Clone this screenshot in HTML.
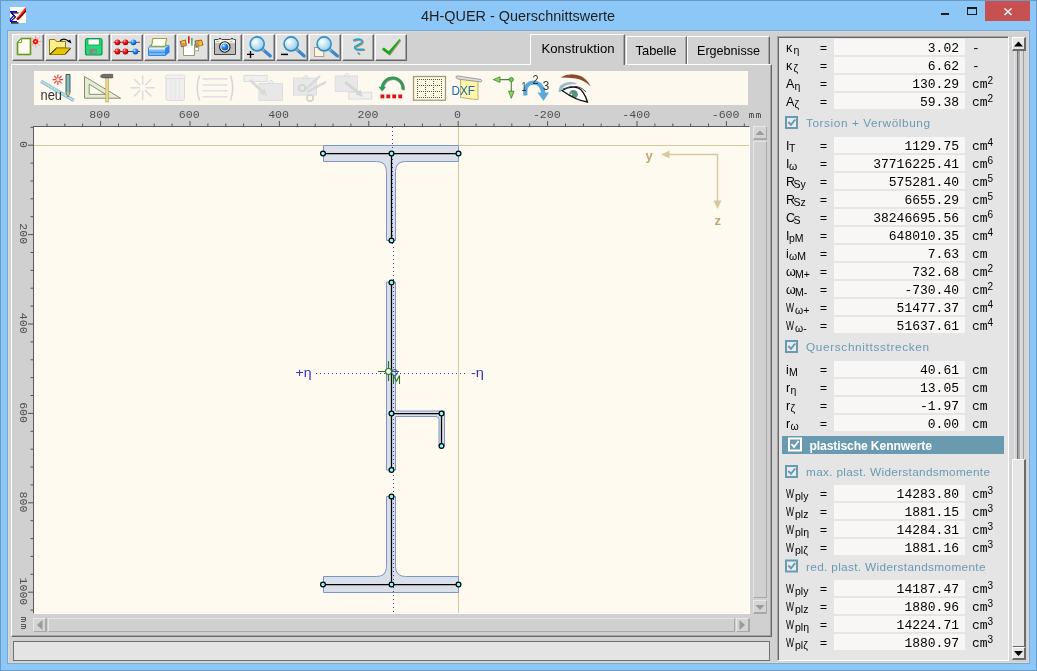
<!DOCTYPE html><html><head><meta charset="utf-8"><title>4H-QUER</title><style>
*{margin:0;padding:0;box-sizing:border-box}
html,body{width:1037px;height:671px;overflow:hidden}
body{position:relative;background:#8DC7F8;font-family:"Liberation Sans",sans-serif}
.a{position:absolute}
.tb{width:32px;height:27px;background:#e1e1e1;border-top:1px solid #fff;border-left:1px solid #fff;border-right:1px solid #666;border-bottom:1px solid #666;box-shadow:inset -1px -1px #a4a4a4}
.tab{background:#d3d3d3;border-top:1px solid #fff;border-left:1px solid #fff;border-right:1px solid #666;box-shadow:inset -1px 0 #a4a4a4}
svg{position:absolute;left:0;top:0;will-change:transform}
</style></head><body>
<div class="a" style="left:0;top:0;width:1037px;height:671px;border:1px solid #6a9ac6"></div>
<div class="a" style="left:7px;top:30px;width:1023px;height:634px;background:#d1d1d1;border:1px solid #78a8d4;box-shadow:inset 1px 1px #dcd9d5,inset -1px -1px #dcd9d5"></div>
<div class="a" style="left:985px;top:1px;width:45px;height:20px;background:#c75050"></div>
<div class="a tb" style="left:12px;top:34px"></div>
<div class="a tb" style="left:45px;top:34px"></div>
<div class="a tb" style="left:78px;top:34px"></div>
<div class="a tb" style="left:111px;top:34px"></div>
<div class="a tb" style="left:144px;top:34px"></div>
<div class="a tb" style="left:177px;top:34px"></div>
<div class="a tb" style="left:210px;top:34px"></div>
<div class="a tb" style="left:243px;top:34px"></div>
<div class="a tb" style="left:276px;top:34px"></div>
<div class="a tb" style="left:309px;top:34px"></div>
<div class="a tb" style="left:342px;top:34px"></div>
<div class="a tb" style="left:375px;top:34px"></div>
<div class="a" style="left:11px;top:64px;width:761px;height:573px;background:#d0d0d0;border-top:1px solid #fff;border-left:1px solid #fff;border-right:1px solid #666;border-bottom:1px solid #666;box-shadow:inset -1px -1px #a4a4a4"></div>
<div class="a tab" style="left:530px;top:34px;width:95px;height:31px;background:#d0d0d0"></div>
<div class="a tab" style="left:626px;top:36px;width:61px;height:28px"></div>
<div class="a tab" style="left:687px;top:36px;width:83px;height:28px"></div>
<div class="a" style="left:34px;top:71px;width:714px;height:34px;background:#fdf9ef"></div>
<div class="a" style="left:33px;top:126px;width:717px;height:488px;background:#fffaef;border-left:1px solid #5a5a5a;border-top:1px solid #5a5a5a;border-right:1px solid #fff;border-bottom:1px solid #fff"></div>
<div class="a" style="left:753px;top:126px;width:14px;height:488px;background:#d0d0d0"></div>
<div class="a" style="left:753px;top:126px;width:14px;height:14px;background:#d4d4d4;border-top:1px solid #e8e8e8;border-left:1px solid #e8e8e8;border-right:1px solid #a8a8a8;border-bottom:2px solid #a8a8a8"></div>
<div class="a" style="left:753px;top:141px;width:14px;height:457px;background:#d0d0d0;border-top:1px solid #e4e4e4;border-left:1px solid #e4e4e4;border-right:1px solid #a8a8a8;border-bottom:1px solid #a8a8a8"></div>
<div class="a" style="left:753px;top:600px;width:14px;height:14px;background:#d4d4d4;border-top:1px solid #e8e8e8;border-left:1px solid #e8e8e8;border-right:1px solid #a8a8a8;border-bottom:2px solid #a8a8a8"></div>
<div class="a" style="left:33px;top:618px;width:14px;height:14px;background:#d4d4d4;border-top:1px solid #e8e8e8;border-left:1px solid #e8e8e8;border-right:2px solid #a8a8a8;border-bottom:1px solid #a8a8a8"></div>
<div class="a" style="left:48px;top:618px;width:687px;height:14px;background:#d0d0d0;border-top:1px solid #e4e4e4;border-left:1px solid #e4e4e4;border-right:1px solid #a8a8a8;border-bottom:1px solid #a8a8a8"></div>
<div class="a" style="left:736px;top:618px;width:14px;height:14px;background:#d4d4d4;border-top:1px solid #e8e8e8;border-left:1px solid #e8e8e8;border-right:2px solid #a8a8a8;border-bottom:1px solid #a8a8a8"></div>
<div class="a" style="left:13px;top:641px;width:757px;height:20px;background:#e4e4e4;border:1px solid #707070"></div>
<div class="a" style="left:777px;top:36px;width:232px;height:625px;background:#e5e5e5;border-top:1px solid #a4a4a4;border-left:1px solid #a4a4a4;border-right:1px solid #fff;border-bottom:1px solid #fff;box-shadow:inset 1px 1px #666"></div>
<div class="a" style="left:1009px;top:37px;width:19px;height:623px;background:#d4d4d4"></div>
<div class="a" style="left:1014px;top:51px;width:1px;height:408px;background:#e2e2e2"></div>
<div class="a" style="left:1017px;top:51px;width:1px;height:408px;background:#727272"></div>
<div class="a" style="left:1018px;top:51px;width:2px;height:408px;background:#a4a4ac"></div>
<div class="a" style="left:1020px;top:51px;width:1px;height:408px;background:#e4e4e4"></div>
<div class="a" style="left:1023px;top:51px;width:1px;height:408px;background:#a0a0a0"></div>
<div class="a" style="left:1012px;top:37px;width:14px;height:14px;background:#e6e6e6;border-top:1px solid #fff;border-left:1px solid #fff;border-right:2px solid #6a6a6a;border-bottom:2px solid #6a6a6a"></div>
<div class="a" style="left:1012px;top:459px;width:14px;height:189px;background:#e6e6e6;border-top:1px solid #fff;border-left:1px solid #fff;border-right:2px solid #6a6a6a;border-bottom:2px solid #6a6a6a"></div>
<div class="a" style="left:1012px;top:647px;width:14px;height:13px;background:#e6e6e6;border-top:1px solid #fff;border-left:1px solid #fff;border-right:2px solid #6a6a6a;border-bottom:2px solid #6a6a6a"></div>
<svg width="1037" height="671"><text x="518" y="20.5" font-family="Liberation Sans" font-size="14.5" fill="#1f1f1f" text-anchor="middle" font-weight="normal" textLength="194" lengthAdjust="spacingAndGlyphs" >4H-QUER - Querschnittswerte</text><rect x="10" y="7" width="16" height="16" fill="#fffaea"/><path d="M10 12H17.5M10.8 12.5L14.5 16L10.8 19.5V21.5M10 22H17.5" fill="none" stroke="#000" stroke-width="1.1" transform="translate(1 0.9)"/><path d="M10 11.5H17M10.5 12L14 15.5L10.5 19V21.5M10 21.5H17" fill="none" stroke="#0000ff" stroke-width="1.2"/><path d="M16 19L25.8 7L26 12L18.5 20Z" fill="#ff0000"/><path d="M17.5 19.8L26 11" stroke="#000" stroke-width="1"/><path d="M18.5 16.5L25 9" stroke="#ffb0b0" stroke-width="0.7" stroke-dasharray="1 1"/><rect x="941" y="13" width="8" height="2" fill="#1a1a1a"/><rect x="967.5" y="7.5" width="9" height="7" fill="none" stroke="#1a1a1a" stroke-width="1"/><rect x="967" y="7" width="10" height="2" fill="#1a1a1a"/><path d="M1004.5 8.5L1011.5 15M1011.5 8.5L1004.5 15" stroke="#fff" stroke-width="1.5"/><text x="578" y="53" font-family="Liberation Sans" font-size="13" fill="#000" text-anchor="middle" font-weight="normal" textLength="73" lengthAdjust="spacingAndGlyphs" >Konstruktion</text><text x="656" y="55" font-family="Liberation Sans" font-size="13" fill="#000" text-anchor="middle" font-weight="normal" textLength="41" lengthAdjust="spacingAndGlyphs" >Tabelle</text><text x="728.5" y="55" font-family="Liberation Sans" font-size="13" fill="#000" text-anchor="middle" font-weight="normal" textLength="63" lengthAdjust="spacingAndGlyphs" >Ergebnisse</text><path d="M47.0 123.5V126" stroke="#555" stroke-width="1"/><path d="M64.8 123.5V126" stroke="#555" stroke-width="1"/><path d="M82.7 123.5V126" stroke="#555" stroke-width="1"/><path d="M100.6 121V126" stroke="#555" stroke-width="1"/><text x="99.8" y="118" font-family="Liberation Mono" font-size="11.6" fill="#505050" text-anchor="middle" font-weight="normal" >800</text><rect x="99.3" y="113.7" width="1" height="1" fill="#505050"/><rect x="106.3" y="113.7" width="1" height="1" fill="#505050"/><path d="M118.5 123.5V126" stroke="#555" stroke-width="1"/><path d="M136.4 123.5V126" stroke="#555" stroke-width="1"/><path d="M154.2 123.5V126" stroke="#555" stroke-width="1"/><path d="M172.1 123.5V126" stroke="#555" stroke-width="1"/><path d="M190.0 121V126" stroke="#555" stroke-width="1"/><text x="189.2" y="118" font-family="Liberation Mono" font-size="11.6" fill="#505050" text-anchor="middle" font-weight="normal" >600</text><rect x="188.7" y="113.7" width="1" height="1" fill="#505050"/><rect x="195.7" y="113.7" width="1" height="1" fill="#505050"/><path d="M207.9 123.5V126" stroke="#555" stroke-width="1"/><path d="M225.8 123.5V126" stroke="#555" stroke-width="1"/><path d="M243.6 123.5V126" stroke="#555" stroke-width="1"/><path d="M261.5 123.5V126" stroke="#555" stroke-width="1"/><path d="M279.4 121V126" stroke="#555" stroke-width="1"/><text x="278.6" y="118" font-family="Liberation Mono" font-size="11.6" fill="#505050" text-anchor="middle" font-weight="normal" >400</text><rect x="278.1" y="113.7" width="1" height="1" fill="#505050"/><rect x="285.1" y="113.7" width="1" height="1" fill="#505050"/><path d="M297.3 123.5V126" stroke="#555" stroke-width="1"/><path d="M315.2 123.5V126" stroke="#555" stroke-width="1"/><path d="M333.0 123.5V126" stroke="#555" stroke-width="1"/><path d="M350.9 123.5V126" stroke="#555" stroke-width="1"/><path d="M368.8 121V126" stroke="#555" stroke-width="1"/><text x="368.0" y="118" font-family="Liberation Mono" font-size="11.6" fill="#505050" text-anchor="middle" font-weight="normal" >200</text><rect x="367.5" y="113.7" width="1" height="1" fill="#505050"/><rect x="374.5" y="113.7" width="1" height="1" fill="#505050"/><path d="M386.7 123.5V126" stroke="#555" stroke-width="1"/><path d="M404.6 123.5V126" stroke="#555" stroke-width="1"/><path d="M422.4 123.5V126" stroke="#555" stroke-width="1"/><path d="M440.3 123.5V126" stroke="#555" stroke-width="1"/><path d="M458.2 121V126" stroke="#555" stroke-width="1"/><text x="457.4" y="118" font-family="Liberation Mono" font-size="11.6" fill="#505050" text-anchor="middle" font-weight="normal" >0</text><rect x="456.9" y="113.7" width="1" height="1" fill="#505050"/><path d="M476.1 123.5V126" stroke="#555" stroke-width="1"/><path d="M494.0 123.5V126" stroke="#555" stroke-width="1"/><path d="M511.8 123.5V126" stroke="#555" stroke-width="1"/><path d="M529.7 123.5V126" stroke="#555" stroke-width="1"/><path d="M547.6 121V126" stroke="#555" stroke-width="1"/><text x="546.8" y="118" font-family="Liberation Mono" font-size="11.6" fill="#505050" text-anchor="middle" font-weight="normal" >-200</text><rect x="549.8" y="113.7" width="1" height="1" fill="#505050"/><rect x="556.7" y="113.7" width="1" height="1" fill="#505050"/><path d="M565.5 123.5V126" stroke="#555" stroke-width="1"/><path d="M583.4 123.5V126" stroke="#555" stroke-width="1"/><path d="M601.2 123.5V126" stroke="#555" stroke-width="1"/><path d="M619.1 123.5V126" stroke="#555" stroke-width="1"/><path d="M637.0 121V126" stroke="#555" stroke-width="1"/><text x="636.2" y="118" font-family="Liberation Mono" font-size="11.6" fill="#505050" text-anchor="middle" font-weight="normal" >-400</text><rect x="639.2" y="113.7" width="1" height="1" fill="#505050"/><rect x="646.1" y="113.7" width="1" height="1" fill="#505050"/><path d="M654.9 123.5V126" stroke="#555" stroke-width="1"/><path d="M672.8 123.5V126" stroke="#555" stroke-width="1"/><path d="M690.6 123.5V126" stroke="#555" stroke-width="1"/><path d="M708.5 123.5V126" stroke="#555" stroke-width="1"/><path d="M726.4 121V126" stroke="#555" stroke-width="1"/><text x="725.6" y="118" font-family="Liberation Mono" font-size="11.6" fill="#505050" text-anchor="middle" font-weight="normal" >-600</text><rect x="728.6" y="113.7" width="1" height="1" fill="#505050"/><rect x="735.5" y="113.7" width="1" height="1" fill="#505050"/><path d="M744.3 123.5V126" stroke="#555" stroke-width="1"/><path d="M749.5 118V113.5H753L753.5 114V118M751.5 113.5V118M756.5 118V113.5H760L760.5 114V118M758.5 113.5V118" fill="none" stroke="#5a5a5a" stroke-width="1"/><path d="M30.5 127.3H33" stroke="#555" stroke-width="1"/><path d="M28 145.2H33" stroke="#555" stroke-width="1"/><text x="0" y="0" transform="translate(19.5 144.4) rotate(90)" font-family="Liberation Mono" font-size="11.6" fill="#505050" text-anchor="middle">0</text><rect x="22.8" y="143.9" width="1" height="1" fill="#505050"/><path d="M30.5 163.1H33" stroke="#555" stroke-width="1"/><path d="M30.5 181.0H33" stroke="#555" stroke-width="1"/><path d="M30.5 198.8H33" stroke="#555" stroke-width="1"/><path d="M30.5 216.7H33" stroke="#555" stroke-width="1"/><path d="M28 234.6H33" stroke="#555" stroke-width="1"/><text x="0" y="0" transform="translate(19.5 233.8) rotate(90)" font-family="Liberation Mono" font-size="11.6" fill="#505050" text-anchor="middle">200</text><rect x="22.8" y="233.3" width="1" height="1" fill="#505050"/><rect x="22.8" y="240.3" width="1" height="1" fill="#505050"/><path d="M30.5 252.5H33" stroke="#555" stroke-width="1"/><path d="M30.5 270.4H33" stroke="#555" stroke-width="1"/><path d="M30.5 288.2H33" stroke="#555" stroke-width="1"/><path d="M30.5 306.1H33" stroke="#555" stroke-width="1"/><path d="M28 324.0H33" stroke="#555" stroke-width="1"/><text x="0" y="0" transform="translate(19.5 323.2) rotate(90)" font-family="Liberation Mono" font-size="11.6" fill="#505050" text-anchor="middle">400</text><rect x="22.8" y="322.7" width="1" height="1" fill="#505050"/><rect x="22.8" y="329.7" width="1" height="1" fill="#505050"/><path d="M30.5 341.9H33" stroke="#555" stroke-width="1"/><path d="M30.5 359.8H33" stroke="#555" stroke-width="1"/><path d="M30.5 377.6H33" stroke="#555" stroke-width="1"/><path d="M30.5 395.5H33" stroke="#555" stroke-width="1"/><path d="M28 413.4H33" stroke="#555" stroke-width="1"/><text x="0" y="0" transform="translate(19.5 412.6) rotate(90)" font-family="Liberation Mono" font-size="11.6" fill="#505050" text-anchor="middle">600</text><rect x="22.8" y="412.1" width="1" height="1" fill="#505050"/><rect x="22.8" y="419.1" width="1" height="1" fill="#505050"/><path d="M30.5 431.3H33" stroke="#555" stroke-width="1"/><path d="M30.5 449.2H33" stroke="#555" stroke-width="1"/><path d="M30.5 467.0H33" stroke="#555" stroke-width="1"/><path d="M30.5 484.9H33" stroke="#555" stroke-width="1"/><path d="M28 502.8H33" stroke="#555" stroke-width="1"/><text x="0" y="0" transform="translate(19.5 502.0) rotate(90)" font-family="Liberation Mono" font-size="11.6" fill="#505050" text-anchor="middle">800</text><rect x="22.8" y="501.5" width="1" height="1" fill="#505050"/><rect x="22.8" y="508.5" width="1" height="1" fill="#505050"/><path d="M30.5 520.7H33" stroke="#555" stroke-width="1"/><path d="M30.5 538.6H33" stroke="#555" stroke-width="1"/><path d="M30.5 556.4H33" stroke="#555" stroke-width="1"/><path d="M30.5 574.3H33" stroke="#555" stroke-width="1"/><path d="M28 592.2H33" stroke="#555" stroke-width="1"/><text x="0" y="0" transform="translate(19.5 591.4) rotate(90)" font-family="Liberation Mono" font-size="11.6" fill="#505050" text-anchor="middle">1000</text><rect x="22.8" y="587.4" width="1" height="1" fill="#505050"/><rect x="22.8" y="594.4" width="1" height="1" fill="#505050"/><rect x="22.8" y="601.3" width="1" height="1" fill="#505050"/><path d="M30.5 610.1H33" stroke="#555" stroke-width="1"/><g transform="translate(26 617) rotate(90)"><path d="M0.5 5V0.5H4L4.5 1V5M2.5 0.5V5M7.5 5V0.5H11L11.5 1V5M9.5 0.5V5" fill="none" stroke="#5a5a5a" stroke-width="1"/></g><path d="M34 145.5H749M458.5 127V613" stroke="#d8c99c" stroke-width="1"/><path d="M316 373h1v1h-1zM320 373h1v1h-1zM324 373h1v1h-1zM328 373h1v1h-1zM332 373h1v1h-1zM336 373h1v1h-1zM340 373h1v1h-1zM344 373h1v1h-1zM348 373h1v1h-1zM352 373h1v1h-1zM356 373h1v1h-1zM360 373h1v1h-1zM364 373h1v1h-1zM368 373h1v1h-1zM372 373h1v1h-1zM376 373h1v1h-1zM380 373h1v1h-1zM384 373h1v1h-1zM388 373h1v1h-1zM392 373h1v1h-1zM396 373h1v1h-1zM400 373h1v1h-1zM404 373h1v1h-1zM408 373h1v1h-1zM412 373h1v1h-1zM416 373h1v1h-1zM420 373h1v1h-1zM424 373h1v1h-1zM428 373h1v1h-1zM432 373h1v1h-1zM436 373h1v1h-1zM440 373h1v1h-1zM444 373h1v1h-1zM448 373h1v1h-1zM452 373h1v1h-1zM456 373h1v1h-1zM460 373h1v1h-1zM464 373h1v1h-1z" fill="#3232c8"/><text x="295.5" y="377" font-family="Liberation Sans" font-size="12.5" fill="#3232c8" text-anchor="start" font-weight="normal" textLength="16" lengthAdjust="spacingAndGlyphs" >+η</text><text x="471" y="377" font-family="Liberation Sans" font-size="12.5" fill="#3232c8" text-anchor="start" font-weight="normal" textLength="13" lengthAdjust="spacingAndGlyphs" >-η</text><path d="M323.5 145.5H458.5V161.5H405.5Q395.5 161.5 395.5 171.5V240.5H386.5V171.5Q386.5 161.5 376.5 161.5H323.5Z" fill="#d9e0ea" stroke="#7b97c0" stroke-width="1"/><path d="M323.5 592.5H458.5V576.5H405.5Q395.5 576.5 395.5 566.5V496.5H386.5V566.5Q386.5 576.5 376.5 576.5H323.5Z" fill="#d9e0ea" stroke="#7b97c0" stroke-width="1"/><path d="M386.5 282V470H395.5V416.5H436Q439 416.5 439 419.5V446H444.5V411H395.5V282Z" fill="#d9e0ea" stroke="#7b97c0" stroke-width="1"/><path d="M392 127h1v1h-1zM392 131h1v1h-1zM392 135h1v1h-1zM392 139h1v1h-1zM392 143h1v1h-1zM392 147h1v1h-1zM392 151h1v1h-1zM392 155h1v1h-1zM392 159h1v1h-1zM392 163h1v1h-1zM392 167h1v1h-1zM392 171h1v1h-1zM392 175h1v1h-1zM392 179h1v1h-1zM392 183h1v1h-1zM392 187h1v1h-1zM392 191h1v1h-1zM392 195h1v1h-1zM392 199h1v1h-1zM392 203h1v1h-1zM392 207h1v1h-1zM392 211h1v1h-1zM392 215h1v1h-1zM392 219h1v1h-1zM392 223h1v1h-1zM392 227h1v1h-1zM392 231h1v1h-1zM392 235h1v1h-1zM392 239h1v1h-1zM392 243h1v1h-1zM393 247h1v1h-1zM393 251h1v1h-1zM393 255h1v1h-1zM393 259h1v1h-1zM393 263h1v1h-1zM393 267h1v1h-1zM393 271h1v1h-1zM393 275h1v1h-1zM393 279h1v1h-1zM393 283h1v1h-1zM393 287h1v1h-1zM393 291h1v1h-1zM393 295h1v1h-1zM393 299h1v1h-1zM393 303h1v1h-1zM393 307h1v1h-1zM393 311h1v1h-1zM393 315h1v1h-1zM393 319h1v1h-1zM393 323h1v1h-1zM393 327h1v1h-1zM393 331h1v1h-1zM393 335h1v1h-1zM393 339h1v1h-1zM393 343h1v1h-1zM393 347h1v1h-1zM393 351h1v1h-1zM393 355h1v1h-1zM393 359h1v1h-1zM393 363h1v1h-1zM393 367h1v1h-1zM393 371h1v1h-1zM393 375h1v1h-1zM393 379h1v1h-1zM393 383h1v1h-1zM393 387h1v1h-1zM393 391h1v1h-1zM393 395h1v1h-1zM393 399h1v1h-1zM393 403h1v1h-1zM393 407h1v1h-1zM393 411h1v1h-1zM393 415h1v1h-1zM393 419h1v1h-1zM393 423h1v1h-1zM393 427h1v1h-1zM393 431h1v1h-1zM393 435h1v1h-1zM393 439h1v1h-1zM393 443h1v1h-1zM393 447h1v1h-1zM393 451h1v1h-1zM393 455h1v1h-1zM393 459h1v1h-1zM393 463h1v1h-1zM393 467h1v1h-1zM393 471h1v1h-1zM393 475h1v1h-1zM393 479h1v1h-1zM393 483h1v1h-1zM393 487h1v1h-1zM393 491h1v1h-1zM393 495h1v1h-1zM393 499h1v1h-1zM393 503h1v1h-1zM393 507h1v1h-1zM393 511h1v1h-1zM393 515h1v1h-1zM393 519h1v1h-1zM393 523h1v1h-1zM393 527h1v1h-1zM393 531h1v1h-1zM393 535h1v1h-1zM393 539h1v1h-1zM393 543h1v1h-1zM393 547h1v1h-1zM393 551h1v1h-1zM393 555h1v1h-1zM393 559h1v1h-1zM393 563h1v1h-1zM393 567h1v1h-1zM393 571h1v1h-1zM393 575h1v1h-1zM393 579h1v1h-1zM393 583h1v1h-1zM393 587h1v1h-1zM393 591h1v1h-1zM393 595h1v1h-1zM393 599h1v1h-1zM393 603h1v1h-1zM393 607h1v1h-1zM393 611h1v1h-1z" fill="#3232c8"/><path d="M323 153.5H458.5M391.5 153.5V240.5M391.5 282.5V470M391.5 413.5H441.5V446M323 584.5H458.5M391.5 584.5V496.5" fill="none" stroke="#000" stroke-width="1.25"/><circle cx="323" cy="153.5" r="2.4" fill="#80ffff" stroke="#000" stroke-width="1.25"/><circle cx="391.5" cy="153.5" r="2.4" fill="#80ffff" stroke="#000" stroke-width="1.25"/><circle cx="458.5" cy="153.5" r="2.4" fill="#80ffff" stroke="#000" stroke-width="1.25"/><circle cx="391.5" cy="240.5" r="2.4" fill="#80ffff" stroke="#000" stroke-width="1.25"/><circle cx="391.5" cy="282.5" r="2.4" fill="#80ffff" stroke="#000" stroke-width="1.25"/><circle cx="391.5" cy="470" r="2.4" fill="#80ffff" stroke="#000" stroke-width="1.25"/><circle cx="391.5" cy="413.5" r="2.4" fill="#80ffff" stroke="#000" stroke-width="1.25"/><circle cx="441.5" cy="413.5" r="2.4" fill="#80ffff" stroke="#000" stroke-width="1.25"/><circle cx="441.5" cy="446" r="2.4" fill="#80ffff" stroke="#000" stroke-width="1.25"/><circle cx="323" cy="584.5" r="2.4" fill="#80ffff" stroke="#000" stroke-width="1.25"/><circle cx="391.5" cy="584.5" r="2.4" fill="#80ffff" stroke="#000" stroke-width="1.25"/><circle cx="458.5" cy="584.5" r="2.4" fill="#80ffff" stroke="#000" stroke-width="1.25"/><circle cx="391.5" cy="496.5" r="2.4" fill="#80ffff" stroke="#000" stroke-width="1.25"/><circle cx="394.5" cy="372.5" r="3" fill="none" stroke="#3232c8" stroke-width="1"/><path d="M378 371.5H399M388.5 361V381" stroke="#1f7a1f" stroke-width="1.2"/><circle cx="388.5" cy="371.5" r="3" fill="#fff" stroke="#1f7a1f" stroke-width="1.2"/><path d="M393.5 384V375.5L396.5 381L399.5 375.5V384" fill="none" stroke="#1f7a1f" stroke-width="1.1"/><path d="M669 154.5H717.5V201" fill="none" stroke="#d8c99c" stroke-width="1.5"/><path d="M661 154.5L669.5 150.5V158.5Z" fill="#d8c99c"/><path d="M717.5 209L713.5 200.5H721.5Z" fill="#d8c99c"/><text x="645.5" y="160" font-family="Liberation Sans" font-size="13" fill="#bca874" text-anchor="start" font-weight="bold" >y</text><text x="714.5" y="225" font-family="Liberation Sans" font-size="13" fill="#bca874" text-anchor="start" font-weight="bold" >z</text><path d="M755.5 135H764.5L760 130.5Z" fill="#9a9a9a"/><path d="M755.5 605H764.5L760 610Z" fill="#9a9a9a"/><path d="M37 625L42.5 620V630Z" fill="#9a9a9a"/><path d="M745 625L739.5 620V630Z" fill="#9a9a9a"/><path d="M1014 46.5H1023L1018.5 41.5Z" fill="#000"/><path d="M1014 651H1023L1018.5 656Z" fill="#000"/><rect x="834" y="39" width="131" height="16" fill="#f8f7f5"/><text x="786" y="52" font-family="Liberation Sans" font-size="12.5" fill="#000" text-anchor="start" font-weight="normal" >κ</text><text x="793.5" y="54" font-family="Liberation Sans" font-size="10.5" fill="#000" text-anchor="start" font-weight="normal" >η</text><path d="M820.5 46.5H826.5M820.5 49.5H826.5" stroke="#000" stroke-width="1"/><text x="959" y="52" font-family="Liberation Mono" font-size="13" fill="#000" text-anchor="end" font-weight="normal" >3.02</text><rect x="946.7" y="47.2" width="1.2" height="1.2" fill="#000"/><text x="972" y="52" font-family="Liberation Mono" font-size="13" fill="#000" text-anchor="start" font-weight="normal" >-</text><rect x="834" y="57" width="131" height="16" fill="#f8f7f5"/><text x="786" y="70" font-family="Liberation Sans" font-size="12.5" fill="#000" text-anchor="start" font-weight="normal" >κ</text><text x="793.5" y="72" font-family="Liberation Sans" font-size="10.5" fill="#000" text-anchor="start" font-weight="normal" >ζ</text><path d="M820.5 64.5H826.5M820.5 67.5H826.5" stroke="#000" stroke-width="1"/><text x="959" y="70" font-family="Liberation Mono" font-size="13" fill="#000" text-anchor="end" font-weight="normal" >6.62</text><text x="972" y="70" font-family="Liberation Mono" font-size="13" fill="#000" text-anchor="start" font-weight="normal" >-</text><rect x="834" y="75" width="131" height="16" fill="#f8f7f5"/><text x="786" y="88" font-family="Liberation Sans" font-size="12.5" fill="#000" text-anchor="start" font-weight="normal" >A</text><text x="794.5" y="90" font-family="Liberation Sans" font-size="10.5" fill="#000" text-anchor="start" font-weight="normal" >η</text><path d="M820.5 82.5H826.5M820.5 85.5H826.5" stroke="#000" stroke-width="1"/><text x="959" y="88" font-family="Liberation Mono" font-size="13" fill="#000" text-anchor="end" font-weight="normal" >130.29</text><rect x="931.1" y="83.2" width="1.2" height="1.2" fill="#000"/><text x="972" y="88" font-family="Liberation Mono" font-size="13" fill="#000" text-anchor="start" font-weight="normal" >cm</text><text x="987.5" y="83.5" font-family="Liberation Sans" font-size="10" fill="#000" text-anchor="start" font-weight="normal" >2</text><rect x="834" y="93" width="131" height="16" fill="#f8f7f5"/><text x="786" y="106" font-family="Liberation Sans" font-size="12.5" fill="#000" text-anchor="start" font-weight="normal" >A</text><text x="794.5" y="108" font-family="Liberation Sans" font-size="10.5" fill="#000" text-anchor="start" font-weight="normal" >ζ</text><path d="M820.5 100.5H826.5M820.5 103.5H826.5" stroke="#000" stroke-width="1"/><text x="959" y="106" font-family="Liberation Mono" font-size="13" fill="#000" text-anchor="end" font-weight="normal" >59.38</text><text x="972" y="106" font-family="Liberation Mono" font-size="13" fill="#000" text-anchor="start" font-weight="normal" >cm</text><text x="987.5" y="101.5" font-family="Liberation Sans" font-size="10" fill="#000" text-anchor="start" font-weight="normal" >2</text><rect x="786" y="117" width="11" height="11" fill="#e8ecee" stroke="#6a9ab0" stroke-width="2"/><path d="M788.3 122L791 124.8L795.2 119.5" fill="none" stroke="#6a9ab0" stroke-width="2"/><text x="806" y="127" font-family="Liberation Sans" font-size="11.8" fill="#6a9ab0" text-anchor="start" font-weight="normal" textLength="124" lengthAdjust="spacing" >Torsion + Verwölbung</text><rect x="834" y="137" width="131" height="16" fill="#f8f7f5"/><text x="786" y="150" font-family="Liberation Sans" font-size="12.5" fill="#000" text-anchor="start" font-weight="normal" >I</text><text x="789.0" y="152" font-family="Liberation Sans" font-size="10.5" fill="#000" text-anchor="start" font-weight="normal" >T</text><path d="M820.5 144.5H826.5M820.5 147.5H826.5" stroke="#000" stroke-width="1"/><text x="959" y="150" font-family="Liberation Mono" font-size="13" fill="#000" text-anchor="end" font-weight="normal" >1129.75</text><text x="972" y="150" font-family="Liberation Mono" font-size="13" fill="#000" text-anchor="start" font-weight="normal" >cm</text><text x="987.5" y="145.5" font-family="Liberation Sans" font-size="10" fill="#000" text-anchor="start" font-weight="normal" >4</text><rect x="834" y="155" width="131" height="16" fill="#f8f7f5"/><text x="786" y="168" font-family="Liberation Sans" font-size="12.5" fill="#000" text-anchor="start" font-weight="normal" >I</text><text x="789.0" y="170" font-family="Liberation Sans" font-size="10.5" fill="#000" text-anchor="start" font-weight="normal" >ω</text><path d="M820.5 162.5H826.5M820.5 165.5H826.5" stroke="#000" stroke-width="1"/><text x="959" y="168" font-family="Liberation Mono" font-size="13" fill="#000" text-anchor="end" font-weight="normal" >37716225.41</text><text x="972" y="168" font-family="Liberation Mono" font-size="13" fill="#000" text-anchor="start" font-weight="normal" >cm</text><text x="987.5" y="163.5" font-family="Liberation Sans" font-size="10" fill="#000" text-anchor="start" font-weight="normal" >6</text><rect x="834" y="173" width="131" height="16" fill="#f8f7f5"/><text x="786" y="186" font-family="Liberation Sans" font-size="12.5" fill="#000" text-anchor="start" font-weight="normal" >R</text><text x="793.5" y="188" font-family="Liberation Sans" font-size="10.5" fill="#000" text-anchor="start" font-weight="normal" >Sy</text><path d="M820.5 180.5H826.5M820.5 183.5H826.5" stroke="#000" stroke-width="1"/><text x="959" y="186" font-family="Liberation Mono" font-size="13" fill="#000" text-anchor="end" font-weight="normal" >575281.40</text><rect x="954.5" y="181.2" width="1.2" height="1.2" fill="#000"/><text x="972" y="186" font-family="Liberation Mono" font-size="13" fill="#000" text-anchor="start" font-weight="normal" >cm</text><text x="987.5" y="181.5" font-family="Liberation Sans" font-size="10" fill="#000" text-anchor="start" font-weight="normal" >5</text><rect x="834" y="191" width="131" height="16" fill="#f8f7f5"/><text x="786" y="204" font-family="Liberation Sans" font-size="12.5" fill="#000" text-anchor="start" font-weight="normal" >R</text><text x="793.5" y="206" font-family="Liberation Sans" font-size="10.5" fill="#000" text-anchor="start" font-weight="normal" >Sz</text><path d="M820.5 198.5H826.5M820.5 201.5H826.5" stroke="#000" stroke-width="1"/><text x="959" y="204" font-family="Liberation Mono" font-size="13" fill="#000" text-anchor="end" font-weight="normal" >6655.29</text><text x="972" y="204" font-family="Liberation Mono" font-size="13" fill="#000" text-anchor="start" font-weight="normal" >cm</text><text x="987.5" y="199.5" font-family="Liberation Sans" font-size="10" fill="#000" text-anchor="start" font-weight="normal" >5</text><rect x="834" y="209" width="131" height="16" fill="#f8f7f5"/><text x="786" y="222" font-family="Liberation Sans" font-size="12.5" fill="#000" text-anchor="start" font-weight="normal" >C</text><text x="793.5" y="224" font-family="Liberation Sans" font-size="10.5" fill="#000" text-anchor="start" font-weight="normal" >S</text><path d="M820.5 216.5H826.5M820.5 219.5H826.5" stroke="#000" stroke-width="1"/><text x="959" y="222" font-family="Liberation Mono" font-size="13" fill="#000" text-anchor="end" font-weight="normal" >38246695.56</text><text x="972" y="222" font-family="Liberation Mono" font-size="13" fill="#000" text-anchor="start" font-weight="normal" >cm</text><text x="987.5" y="217.5" font-family="Liberation Sans" font-size="10" fill="#000" text-anchor="start" font-weight="normal" >6</text><rect x="834" y="227" width="131" height="16" fill="#f8f7f5"/><text x="786" y="240" font-family="Liberation Sans" font-size="12.5" fill="#000" text-anchor="start" font-weight="normal" >I</text><text x="789.0" y="242" font-family="Liberation Sans" font-size="10.5" fill="#000" text-anchor="start" font-weight="normal" >pM</text><path d="M820.5 234.5H826.5M820.5 237.5H826.5" stroke="#000" stroke-width="1"/><text x="959" y="240" font-family="Liberation Mono" font-size="13" fill="#000" text-anchor="end" font-weight="normal" >648010.35</text><rect x="915.5" y="235.2" width="1.2" height="1.2" fill="#000"/><rect x="931.1" y="235.2" width="1.2" height="1.2" fill="#000"/><text x="972" y="240" font-family="Liberation Mono" font-size="13" fill="#000" text-anchor="start" font-weight="normal" >cm</text><text x="987.5" y="235.5" font-family="Liberation Sans" font-size="10" fill="#000" text-anchor="start" font-weight="normal" >4</text><rect x="834" y="245" width="131" height="16" fill="#f8f7f5"/><text x="786" y="258" font-family="Liberation Sans" font-size="12.5" fill="#000" text-anchor="start" font-weight="normal" >i</text><text x="789.0" y="260" font-family="Liberation Sans" font-size="10.5" fill="#000" text-anchor="start" font-weight="normal" >ωM</text><path d="M820.5 252.5H826.5M820.5 255.5H826.5" stroke="#000" stroke-width="1"/><text x="959" y="258" font-family="Liberation Mono" font-size="13" fill="#000" text-anchor="end" font-weight="normal" >7.63</text><text x="972" y="258" font-family="Liberation Mono" font-size="13" fill="#000" text-anchor="start" font-weight="normal" >cm</text><rect x="834" y="263" width="131" height="16" fill="#f8f7f5"/><text x="786" y="276" font-family="Liberation Sans" font-size="12.5" fill="#000" text-anchor="start" font-weight="normal" >ω</text><text x="795.0" y="278" font-family="Liberation Sans" font-size="10.5" fill="#000" text-anchor="start" font-weight="normal" >M+</text><path d="M820.5 270.5H826.5M820.5 273.5H826.5" stroke="#000" stroke-width="1"/><text x="959" y="276" font-family="Liberation Mono" font-size="13" fill="#000" text-anchor="end" font-weight="normal" >732.68</text><text x="972" y="276" font-family="Liberation Mono" font-size="13" fill="#000" text-anchor="start" font-weight="normal" >cm</text><text x="987.5" y="271.5" font-family="Liberation Sans" font-size="10" fill="#000" text-anchor="start" font-weight="normal" >2</text><rect x="834" y="281" width="131" height="16" fill="#f8f7f5"/><text x="786" y="294" font-family="Liberation Sans" font-size="12.5" fill="#000" text-anchor="start" font-weight="normal" >ω</text><text x="795.0" y="296" font-family="Liberation Sans" font-size="10.5" fill="#000" text-anchor="start" font-weight="normal" >M-</text><path d="M820.5 288.5H826.5M820.5 291.5H826.5" stroke="#000" stroke-width="1"/><text x="959" y="294" font-family="Liberation Mono" font-size="13" fill="#000" text-anchor="end" font-weight="normal" >-730.40</text><rect x="931.1" y="289.2" width="1.2" height="1.2" fill="#000"/><rect x="954.5" y="289.2" width="1.2" height="1.2" fill="#000"/><text x="972" y="294" font-family="Liberation Mono" font-size="13" fill="#000" text-anchor="start" font-weight="normal" >cm</text><text x="987.5" y="289.5" font-family="Liberation Sans" font-size="10" fill="#000" text-anchor="start" font-weight="normal" >2</text><rect x="834" y="299" width="131" height="16" fill="#f8f7f5"/><text x="786" y="312" font-family="Liberation Sans" font-size="12.5" fill="#000" text-anchor="start" font-weight="normal" textLength="8" lengthAdjust="spacingAndGlyphs" >W</text><text x="795.0" y="314" font-family="Liberation Sans" font-size="10.5" fill="#000" text-anchor="start" font-weight="normal" >ω+</text><path d="M820.5 306.5H826.5M820.5 309.5H826.5" stroke="#000" stroke-width="1"/><text x="959" y="312" font-family="Liberation Mono" font-size="13" fill="#000" text-anchor="end" font-weight="normal" >51477.37</text><text x="972" y="312" font-family="Liberation Mono" font-size="13" fill="#000" text-anchor="start" font-weight="normal" >cm</text><text x="987.5" y="307.5" font-family="Liberation Sans" font-size="10" fill="#000" text-anchor="start" font-weight="normal" >4</text><rect x="834" y="317" width="131" height="16" fill="#f8f7f5"/><text x="786" y="330" font-family="Liberation Sans" font-size="12.5" fill="#000" text-anchor="start" font-weight="normal" textLength="8" lengthAdjust="spacingAndGlyphs" >W</text><text x="795.0" y="332" font-family="Liberation Sans" font-size="10.5" fill="#000" text-anchor="start" font-weight="normal" >ω-</text><path d="M820.5 324.5H826.5M820.5 327.5H826.5" stroke="#000" stroke-width="1"/><text x="959" y="330" font-family="Liberation Mono" font-size="13" fill="#000" text-anchor="end" font-weight="normal" >51637.61</text><text x="972" y="330" font-family="Liberation Mono" font-size="13" fill="#000" text-anchor="start" font-weight="normal" >cm</text><text x="987.5" y="325.5" font-family="Liberation Sans" font-size="10" fill="#000" text-anchor="start" font-weight="normal" >4</text><rect x="786" y="341" width="11" height="11" fill="#e8ecee" stroke="#6a9ab0" stroke-width="2"/><path d="M788.3 346L791 348.8L795.2 343.5" fill="none" stroke="#6a9ab0" stroke-width="2"/><text x="806" y="351" font-family="Liberation Sans" font-size="11.8" fill="#6a9ab0" text-anchor="start" font-weight="normal" textLength="123" lengthAdjust="spacing" >Querschnittsstrecken</text><rect x="834" y="361" width="131" height="16" fill="#f8f7f5"/><text x="786" y="374" font-family="Liberation Sans" font-size="12.5" fill="#000" text-anchor="start" font-weight="normal" >i</text><text x="789.0" y="376" font-family="Liberation Sans" font-size="10.5" fill="#000" text-anchor="start" font-weight="normal" >M</text><path d="M820.5 368.5H826.5M820.5 371.5H826.5" stroke="#000" stroke-width="1"/><text x="959" y="374" font-family="Liberation Mono" font-size="13" fill="#000" text-anchor="end" font-weight="normal" >40.61</text><rect x="931.1" y="369.2" width="1.2" height="1.2" fill="#000"/><text x="972" y="374" font-family="Liberation Mono" font-size="13" fill="#000" text-anchor="start" font-weight="normal" >cm</text><rect x="834" y="379" width="131" height="16" fill="#f8f7f5"/><text x="786" y="392" font-family="Liberation Sans" font-size="12.5" fill="#000" text-anchor="start" font-weight="normal" >r</text><text x="790.5" y="394" font-family="Liberation Sans" font-size="10.5" fill="#000" text-anchor="start" font-weight="normal" >η</text><path d="M820.5 386.5H826.5M820.5 389.5H826.5" stroke="#000" stroke-width="1"/><text x="959" y="392" font-family="Liberation Mono" font-size="13" fill="#000" text-anchor="end" font-weight="normal" >13.05</text><rect x="946.7" y="387.2" width="1.2" height="1.2" fill="#000"/><text x="972" y="392" font-family="Liberation Mono" font-size="13" fill="#000" text-anchor="start" font-weight="normal" >cm</text><rect x="834" y="397" width="131" height="16" fill="#f8f7f5"/><text x="786" y="410" font-family="Liberation Sans" font-size="12.5" fill="#000" text-anchor="start" font-weight="normal" >r</text><text x="790.5" y="412" font-family="Liberation Sans" font-size="10.5" fill="#000" text-anchor="start" font-weight="normal" >ζ</text><path d="M820.5 404.5H826.5M820.5 407.5H826.5" stroke="#000" stroke-width="1"/><text x="959" y="410" font-family="Liberation Mono" font-size="13" fill="#000" text-anchor="end" font-weight="normal" >-1.97</text><text x="972" y="410" font-family="Liberation Mono" font-size="13" fill="#000" text-anchor="start" font-weight="normal" >cm</text><rect x="834" y="415" width="131" height="16" fill="#f8f7f5"/><text x="786" y="428" font-family="Liberation Sans" font-size="12.5" fill="#000" text-anchor="start" font-weight="normal" >r</text><text x="790.5" y="430" font-family="Liberation Sans" font-size="10.5" fill="#000" text-anchor="start" font-weight="normal" >ω</text><path d="M820.5 422.5H826.5M820.5 425.5H826.5" stroke="#000" stroke-width="1"/><text x="959" y="428" font-family="Liberation Mono" font-size="13" fill="#000" text-anchor="end" font-weight="normal" >0.00</text><rect x="931.1" y="423.2" width="1.2" height="1.2" fill="#000"/><rect x="946.7" y="423.2" width="1.2" height="1.2" fill="#000"/><rect x="954.5" y="423.2" width="1.2" height="1.2" fill="#000"/><text x="972" y="428" font-family="Liberation Mono" font-size="13" fill="#000" text-anchor="start" font-weight="normal" >cm</text><rect x="782" y="436" width="222" height="18" fill="#6a9ab0"/><rect x="789" y="438.5" width="12" height="12" fill="#6a9ab0" stroke="#fff" stroke-width="2"/><path d="M791.5 444L794 447L798.5 441" fill="none" stroke="#fff" stroke-width="1.8"/><text x="809.5" y="449.5" font-family="Liberation Sans" font-size="12.2" fill="#fff" text-anchor="start" font-weight="bold" textLength="122.5" lengthAdjust="spacing" >plastische Kennwerte</text><rect x="786" y="466" width="11" height="11" fill="#e8ecee" stroke="#6a9ab0" stroke-width="2"/><path d="M788.3 471L791 473.8L795.2 468.5" fill="none" stroke="#6a9ab0" stroke-width="2"/><text x="806" y="476" font-family="Liberation Sans" font-size="11.8" fill="#6a9ab0" text-anchor="start" font-weight="normal" textLength="184" lengthAdjust="spacing" >max. plast. Widerstandsmomente</text><rect x="834" y="485" width="131" height="16" fill="#f8f7f5"/><text x="786" y="498" font-family="Liberation Sans" font-size="12.5" fill="#000" text-anchor="start" font-weight="normal" textLength="8" lengthAdjust="spacingAndGlyphs" >W</text><text x="795.0" y="500" font-family="Liberation Sans" font-size="10.5" fill="#000" text-anchor="start" font-weight="normal" >ply</text><path d="M820.5 492.5H826.5M820.5 495.5H826.5" stroke="#000" stroke-width="1"/><text x="959" y="498" font-family="Liberation Mono" font-size="13" fill="#000" text-anchor="end" font-weight="normal" >14283.80</text><rect x="954.5" y="493.2" width="1.2" height="1.2" fill="#000"/><text x="972" y="498" font-family="Liberation Mono" font-size="13" fill="#000" text-anchor="start" font-weight="normal" >cm</text><text x="987.5" y="493.5" font-family="Liberation Sans" font-size="10" fill="#000" text-anchor="start" font-weight="normal" >3</text><rect x="834" y="503" width="131" height="16" fill="#f8f7f5"/><text x="786" y="516" font-family="Liberation Sans" font-size="12.5" fill="#000" text-anchor="start" font-weight="normal" textLength="8" lengthAdjust="spacingAndGlyphs" >W</text><text x="795.0" y="518" font-family="Liberation Sans" font-size="10.5" fill="#000" text-anchor="start" font-weight="normal" >plz</text><path d="M820.5 510.5H826.5M820.5 513.5H826.5" stroke="#000" stroke-width="1"/><text x="959" y="516" font-family="Liberation Mono" font-size="13" fill="#000" text-anchor="end" font-weight="normal" >1881.15</text><text x="972" y="516" font-family="Liberation Mono" font-size="13" fill="#000" text-anchor="start" font-weight="normal" >cm</text><text x="987.5" y="511.5" font-family="Liberation Sans" font-size="10" fill="#000" text-anchor="start" font-weight="normal" >3</text><rect x="834" y="521" width="131" height="16" fill="#f8f7f5"/><text x="786" y="534" font-family="Liberation Sans" font-size="12.5" fill="#000" text-anchor="start" font-weight="normal" textLength="8" lengthAdjust="spacingAndGlyphs" >W</text><text x="795.0" y="536" font-family="Liberation Sans" font-size="10.5" fill="#000" text-anchor="start" font-weight="normal" >plη</text><path d="M820.5 528.5H826.5M820.5 531.5H826.5" stroke="#000" stroke-width="1"/><text x="959" y="534" font-family="Liberation Mono" font-size="13" fill="#000" text-anchor="end" font-weight="normal" >14284.31</text><text x="972" y="534" font-family="Liberation Mono" font-size="13" fill="#000" text-anchor="start" font-weight="normal" >cm</text><text x="987.5" y="529.5" font-family="Liberation Sans" font-size="10" fill="#000" text-anchor="start" font-weight="normal" >3</text><rect x="834" y="539" width="131" height="16" fill="#f8f7f5"/><text x="786" y="552" font-family="Liberation Sans" font-size="12.5" fill="#000" text-anchor="start" font-weight="normal" textLength="8" lengthAdjust="spacingAndGlyphs" >W</text><text x="795.0" y="554" font-family="Liberation Sans" font-size="10.5" fill="#000" text-anchor="start" font-weight="normal" >plζ</text><path d="M820.5 546.5H826.5M820.5 549.5H826.5" stroke="#000" stroke-width="1"/><text x="959" y="552" font-family="Liberation Mono" font-size="13" fill="#000" text-anchor="end" font-weight="normal" >1881.16</text><text x="972" y="552" font-family="Liberation Mono" font-size="13" fill="#000" text-anchor="start" font-weight="normal" >cm</text><text x="987.5" y="547.5" font-family="Liberation Sans" font-size="10" fill="#000" text-anchor="start" font-weight="normal" >3</text><rect x="786" y="560.5" width="11" height="11" fill="#e8ecee" stroke="#6a9ab0" stroke-width="2"/><path d="M788.3 565.5L791 568.3L795.2 563.0" fill="none" stroke="#6a9ab0" stroke-width="2"/><text x="806" y="570.5" font-family="Liberation Sans" font-size="11.8" fill="#6a9ab0" text-anchor="start" font-weight="normal" textLength="179.5" lengthAdjust="spacing" >red. plast. Widerstandsmomente</text><rect x="834" y="580" width="131" height="16" fill="#f8f7f5"/><text x="786" y="593" font-family="Liberation Sans" font-size="12.5" fill="#000" text-anchor="start" font-weight="normal" textLength="8" lengthAdjust="spacingAndGlyphs" >W</text><text x="795.0" y="595" font-family="Liberation Sans" font-size="10.5" fill="#000" text-anchor="start" font-weight="normal" >ply</text><path d="M820.5 587.5H826.5M820.5 590.5H826.5" stroke="#000" stroke-width="1"/><text x="959" y="593" font-family="Liberation Mono" font-size="13" fill="#000" text-anchor="end" font-weight="normal" >14187.47</text><text x="972" y="593" font-family="Liberation Mono" font-size="13" fill="#000" text-anchor="start" font-weight="normal" >cm</text><text x="987.5" y="588.5" font-family="Liberation Sans" font-size="10" fill="#000" text-anchor="start" font-weight="normal" >3</text><rect x="834" y="598" width="131" height="16" fill="#f8f7f5"/><text x="786" y="611" font-family="Liberation Sans" font-size="12.5" fill="#000" text-anchor="start" font-weight="normal" textLength="8" lengthAdjust="spacingAndGlyphs" >W</text><text x="795.0" y="613" font-family="Liberation Sans" font-size="10.5" fill="#000" text-anchor="start" font-weight="normal" >plz</text><path d="M820.5 605.5H826.5M820.5 608.5H826.5" stroke="#000" stroke-width="1"/><text x="959" y="611" font-family="Liberation Mono" font-size="13" fill="#000" text-anchor="end" font-weight="normal" >1880.96</text><rect x="931.1" y="606.2" width="1.2" height="1.2" fill="#000"/><text x="972" y="611" font-family="Liberation Mono" font-size="13" fill="#000" text-anchor="start" font-weight="normal" >cm</text><text x="987.5" y="606.5" font-family="Liberation Sans" font-size="10" fill="#000" text-anchor="start" font-weight="normal" >3</text><rect x="834" y="616" width="131" height="16" fill="#f8f7f5"/><text x="786" y="629" font-family="Liberation Sans" font-size="12.5" fill="#000" text-anchor="start" font-weight="normal" textLength="8" lengthAdjust="spacingAndGlyphs" >W</text><text x="795.0" y="631" font-family="Liberation Sans" font-size="10.5" fill="#000" text-anchor="start" font-weight="normal" >plη</text><path d="M820.5 623.5H826.5M820.5 626.5H826.5" stroke="#000" stroke-width="1"/><text x="959" y="629" font-family="Liberation Mono" font-size="13" fill="#000" text-anchor="end" font-weight="normal" >14224.71</text><text x="972" y="629" font-family="Liberation Mono" font-size="13" fill="#000" text-anchor="start" font-weight="normal" >cm</text><text x="987.5" y="624.5" font-family="Liberation Sans" font-size="10" fill="#000" text-anchor="start" font-weight="normal" >3</text><rect x="834" y="634" width="131" height="16" fill="#f8f7f5"/><text x="786" y="647" font-family="Liberation Sans" font-size="12.5" fill="#000" text-anchor="start" font-weight="normal" textLength="8" lengthAdjust="spacingAndGlyphs" >W</text><text x="795.0" y="649" font-family="Liberation Sans" font-size="10.5" fill="#000" text-anchor="start" font-weight="normal" >plζ</text><path d="M820.5 641.5H826.5M820.5 644.5H826.5" stroke="#000" stroke-width="1"/><text x="959" y="647" font-family="Liberation Mono" font-size="13" fill="#000" text-anchor="end" font-weight="normal" >1880.97</text><rect x="931.1" y="642.2" width="1.2" height="1.2" fill="#000"/><text x="972" y="647" font-family="Liberation Mono" font-size="13" fill="#000" text-anchor="start" font-weight="normal" >cm</text><text x="987.5" y="642.5" font-family="Liberation Sans" font-size="10" fill="#000" text-anchor="start" font-weight="normal" >3</text><defs><radialGradient id="lens" cx="0.35" cy="0.35" r="0.7"><stop offset="0" stop-color="#ffffff"/><stop offset="0.5" stop-color="#c8e4f2"/><stop offset="1" stop-color="#9cc8e0"/></radialGradient><radialGradient id="rball" cx="0.35" cy="0.3" r="0.7"><stop offset="0" stop-color="#ffd0d0"/><stop offset="0.35" stop-color="#ff2020"/><stop offset="1" stop-color="#990000"/></radialGradient><radialGradient id="bball" cx="0.35" cy="0.3" r="0.7"><stop offset="0" stop-color="#e0f0ff"/><stop offset="0.35" stop-color="#3399ff"/><stop offset="1" stop-color="#0b4fa0"/></radialGradient><linearGradient id="eyesh" x1="0" y1="0" x2="1" y2="0"><stop offset="0" stop-color="#a8c8d8"/><stop offset="1" stop-color="#5a8aa0"/></linearGradient></defs><path d="M21.5 38.5H30.5V54.5H17.5V42.5Z" fill="#fffbf0" stroke="#5e9a1a" stroke-width="1.6" stroke-linejoin="round"/><path d="M17.5 42.5L21.5 38.5V42.5Z" fill="#fff" stroke="#5e9a1a" stroke-width="0.8"/><g stroke="#ff9090" stroke-width="0.9"><path d="M35.5 35.5V47.5M29.5 41.5H41.5M31.3 37.3L39.7 45.7M39.7 37.3L31.3 45.7"/></g><circle cx="35.5" cy="41.5" r="2.6" fill="#ff0000"/><circle cx="35.5" cy="41.5" r="1" fill="#d8e860"/><path d="M49.5 39.5H55L56.5 41.5H65.5V48H56.5L49.5 54.5Z" fill="#ffee88" stroke="#8a7a10" stroke-width="1"/><path d="M49.5 54.5L56.5 48H70.5L64.5 54.5Z" fill="#e6c400" stroke="#8a7a10" stroke-width="1"/><path d="M50 54.5L56.5 48.2M65 54.6L70.5 48.5" stroke="#000" stroke-width="0.8"/><path d="M60 40.8Q64 37 69 41.5" fill="none" stroke="#000" stroke-width="1.2"/><path d="M71.5 43.5L67.5 41.5L70 39.5Z" fill="#000"/><rect x="85.5" y="38.5" width="16.5" height="16.5" rx="2" fill="#22dd77" stroke="#109844" stroke-width="1.2"/><rect x="88" y="39" width="11.3" height="6" fill="#fff" stroke="#109844" stroke-width="0.8"/><rect x="89.2" y="48.8" width="7.8" height="5" fill="#888"/><rect x="93.1" y="51" width="2.8" height="1.8" fill="#22dd77"/><path d="M113.5 42.3H140M113.5 51.5H140" stroke="#555" stroke-width="1"/><circle cx="117.5" cy="42.3" r="2.9" fill="url(#rball)"/><circle cx="117.5" cy="51.5" r="2.9" fill="url(#rball)"/><circle cx="125.4" cy="42.3" r="2.9" fill="url(#rball)"/><circle cx="125.4" cy="51.5" r="2.9" fill="url(#rball)"/><circle cx="133.4" cy="42.3" r="2.9" fill="url(#bball)"/><circle cx="135.4" cy="51.5" r="2.9" fill="url(#bball)"/><path d="M148.5 48H165.5V55.5H148.5Z" fill="#78b8f6" stroke="#3a88dd" stroke-width="1"/><path d="M150 45.5H169L165.5 48.5H148.5Z" fill="#a8d0f8" stroke="#3a88dd" stroke-width="0.8"/><path d="M149 48.8H165.3" stroke="#fff" stroke-width="1.3"/><path d="M149 52.4H165.3" stroke="#3a88dd" stroke-width="0.9"/><path d="M165.5 48.5L169.5 45.5V52.5L165.5 55.8Z" fill="#2a84ee"/><path d="M153 38.5H166.5V40.5L165.8 41.5V44.8L165 46.3H151.5V44.5L152.3 43.3V40.5Z" fill="#fff" stroke="#99aa22" stroke-width="1.2"/><path d="M185 40.5H193.5L195 44V55.5H183.5V44Z" fill="#fff"/><path d="M183.5 44V55.5H194.5V44" fill="none" stroke="#9a9a6a" stroke-width="1"/><rect x="194.8" y="47.3" width="3.7" height="3.5" fill="#fff" stroke="#9a9a6a" stroke-width="0.8"/><path d="M180.2 41.5L185.5 40L186.5 45.5L181.5 46.8Z" fill="#e0a050" stroke="#8a4a10" stroke-width="0.8"/><rect x="182" y="41" width="3" height="2" fill="#ffcc00"/><rect x="181" y="43" width="2.5" height="2" fill="#9a9a9a"/><path d="M195 41L201.5 40L203 45L196 46.8Z" fill="#e0a050" stroke="#8a4a10" stroke-width="0.8"/><rect x="199.5" y="41.5" width="2.2" height="4" fill="#ffcc00"/><rect x="196" y="42.5" width="2.5" height="2.5" fill="#9a9a9a"/><path d="M188.8 36.2V43.6" stroke="#ee1111" stroke-width="1.6"/><path d="M191.9 38V45.7" stroke="#11bb55" stroke-width="1.4"/><path d="M214.5 39.5H218L219 38.5H221L222 39.5H230L231 38.5H233L234 39.5H235.5V54.5H214.5Z" fill="#bdbdbd" stroke="#444" stroke-width="1"/><rect x="215" y="40" width="20" height="2.8" fill="#fff8e0"/><path d="M216.5 41.4H219M230 41.4H232.5" stroke="#88aadd" stroke-width="0.8"/><circle cx="224.8" cy="47" r="5.2" fill="#fff" stroke="#111" stroke-width="1.1"/><circle cx="224.8" cy="47" r="3.5" fill="url(#bball)"/><path d="M262.5 49.199999999999996L270.3 56" stroke="#3a88cc" stroke-width="3.2" stroke-linecap="round"/><path d="M262.2 48.9L264.2 50.9" stroke="#b0b0a0" stroke-width="2"/><circle cx="257.2" cy="43.9" r="7" fill="url(#lens)" stroke="#2a90c8" stroke-width="1.6"/><path d="M247 54.4H254M250.5 51V58" stroke="#000" stroke-width="1.4"/><path d="M296.40000000000003 49.199999999999996L304.2 56" stroke="#3a88cc" stroke-width="3.2" stroke-linecap="round"/><path d="M296.1 48.9L298.1 50.9" stroke="#b0b0a0" stroke-width="2"/><circle cx="291.1" cy="43.9" r="7" fill="url(#lens)" stroke="#2a90c8" stroke-width="1.6"/><path d="M281 54.4H288" stroke="#000" stroke-width="1.5"/><rect x="314.5" y="47.5" width="9.3" height="9" fill="#fff4d8" stroke="#a09890" stroke-width="0.9"/><path d="M329.40000000000003 49.199999999999996L337.5 56" stroke="#3a88cc" stroke-width="3.2" stroke-linecap="round"/><path d="M329.1 48.9L331.1 50.9" stroke="#b0b0a0" stroke-width="2"/><circle cx="324.1" cy="43.9" r="7" fill="url(#lens)" stroke="#2a90c8" stroke-width="1.6"/><path d="M353.5 40.5Q358 38.5 361.5 39.5Q363.5 41.5 361 43.5L355.5 46.5Q354.5 49 357 49.3H364.5M358.2 52.5L359.5 54" fill="none" stroke="#a89070" stroke-width="1.6" transform="translate(0.6 0.8)"/><path d="M353 40.5Q357.5 38.5 361 39.5Q363 41.5 360.5 43.5L355 46.5Q354 49 356.5 49.3H364M357.7 52.5L359 54" fill="none" stroke="#22aacc" stroke-width="1.7"/><path d="M381.8 49.3L383.8 47.6L388.7 51.3L399.5 39L400.5 39.8L389.2 54.8Z" fill="#a89070" transform="translate(0.8 0.9)"/><path d="M381.8 49.3L383.8 47.6L388.7 51.3L399.5 39L400.5 39.8L389.2 54.8Z" fill="#11aa11"/><path d="M41 81.2L73.8 100.5" stroke="#88bcc8" stroke-width="3.4"/><path d="M41 81.2L73.8 100.5" stroke="#b4dce4" stroke-width="2"/><g stroke="#ee4444" stroke-width="1.2"><path d="M57.9 74.5V85M52.6 79.7H63.2M54.2 76L61.6 83.4M61.6 76L54.2 83.4"/></g><circle cx="57.9" cy="79.7" r="1.6" fill="#fffaf0"/><path d="M66 74.5H70V92.5L68 96.9L66 92.5Z" fill="#88bbc0" stroke="#2f5050" stroke-width="0.9"/><path d="M66.3 92.5L68 96.9L69.7 92.5Z" fill="#e0c080"/><text x="40.5" y="99.5" font-family="Liberation Sans" font-size="14" fill="#333" text-anchor="start" font-weight="normal" textLength="21.5" lengthAdjust="spacingAndGlyphs" >neu</text><path d="M84.5 76.5V98.2H120.6Z" fill="#e2f0d2" stroke="#8a8a7a" stroke-width="1"/><path d="M89.2 84.2V94.3H105.6Z" fill="#fffaef" stroke="#8a8a7a" stroke-width="1"/><rect x="105.8" y="77.5" width="2.8" height="24.5" fill="#eed890" stroke="#b8a050" stroke-width="0.6"/><path d="M100.3 76.5Q101 74.3 104 74.3H112.7V77.9H104Q101 77.9 100.3 76.5Z" fill="#707070" stroke="#404040" stroke-width="0.6"/><g stroke="#dcdcdc" stroke-width="1.5"><path d="M142.7 75.5V84.7M142.7 90.7V99.9M130.5 87.7H139.7M145.7 87.7H154.9M134 79L140.3 85.3M145.1 90.1L151.4 96.4M151.4 79L145.1 85.3M140.3 90.1L134 96.4"/></g><path d="M166 76.5H184.5V98.5Q184.5 100.5 182.5 100.5H168Q166 100.5 166 98.5Z" fill="#eeeeee" stroke="#dadada" stroke-width="1"/><rect x="165.5" y="75" width="19.5" height="3.5" rx="1.5" fill="#f2f2f2" stroke="#dadada" stroke-width="0.8"/><path d="M171 79V99M175.2 79V99M179.4 79V99" stroke="#e2e2e2" stroke-width="0.8"/><path d="M199.5 75.5Q195 88 199.5 100.5M230.5 75.5Q235 88 230.5 100.5" fill="none" stroke="#d6d6d6" stroke-width="1.6"/><path d="M202.6 78.9H227.6M202.6 85H227.6M202.6 90.8H227.6M202.6 96.8H227.6" stroke="#e0e0e4" stroke-width="1.6"/><rect x="259" y="83.5" width="23.5" height="16.9" fill="#e8e8e8" stroke="#dedede" stroke-width="1"/><path d="M268 83.5L270 80.5H272L274 83.5Z" fill="#f0f0f0" stroke="#dadada" stroke-width="0.8"/><rect x="244" y="75.4" width="23" height="6" fill="#f0f0f0" stroke="#dcdcdc" stroke-width="1"/><path d="M250 80L264 93" stroke="#dadada" stroke-width="3"/><path d="M267 96L259.5 93.5L264.5 88.5Z" fill="#dadada"/><rect x="293.4" y="78.1" width="23" height="17" fill="#e8e8e8" stroke="#dedede" stroke-width="1"/><path d="M303 78.1L305 75.5H307L309 78.1Z" fill="#f0f0f0" stroke="#dadada" stroke-width="0.8"/><path d="M305 90L320 76M307 92L326 82" stroke="#d8d8d8" stroke-width="2"/><circle cx="302" cy="88" r="3.2" fill="none" stroke="#d4d4d4" stroke-width="1.8"/><circle cx="310" cy="98" r="3.2" fill="none" stroke="#d4d4d4" stroke-width="1.8"/><rect x="335.2" y="76" width="22.3" height="15.6" fill="#e8e8e8" stroke="#dedede" stroke-width="1"/><path d="M344 76L346 73.5H348L350 76Z" fill="#f0f0f0" stroke="#dadada" stroke-width="0.8"/><rect x="348.7" y="92.3" width="22.9" height="6.7" fill="#f0f0f0" stroke="#dcdcdc" stroke-width="1"/><path d="M345 82L360 94" stroke="#d6d6d6" stroke-width="3"/><path d="M363 97L355.5 94.5L360.5 89.5Z" fill="#d6d6d6"/><path d="M382.3 88.5A10.3 10.3 0 1 1 402.8 89.5" fill="none" stroke="#9a9a8a" stroke-width="3" transform="translate(0.6 0.7)"/><path d="M382.3 88.5A10.3 10.3 0 1 1 402.8 89.5" fill="none" stroke="#339955" stroke-width="2.8"/><path d="M378.4 86.8H386L382.1 91.5Z" fill="#339955"/><rect x="380.5" y="94.5" width="3.8" height="3.8" fill="#dd1111"/><rect x="386.4" y="94.5" width="3.8" height="3.8" fill="#dd1111"/><rect x="392.3" y="94.5" width="3.8" height="3.8" fill="#dd1111"/><rect x="398.3" y="94.5" width="3.8" height="3.8" fill="#dd1111"/><rect x="413.5" y="76.5" width="32" height="23.7" fill="#fffbe0" stroke="#a09a80" stroke-width="1.3"/><path d="M417 79h1v1h-1zM417 81h1v1h-1zM417 83h1v1h-1zM417 85h1v1h-1zM417 87h1v1h-1zM417 89h1v1h-1zM417 91h1v1h-1zM417 93h1v1h-1zM417 95h1v1h-1zM417 97h1v1h-1zM425 79h1v1h-1zM425 81h1v1h-1zM425 83h1v1h-1zM425 85h1v1h-1zM425 87h1v1h-1zM425 89h1v1h-1zM425 91h1v1h-1zM425 93h1v1h-1zM425 95h1v1h-1zM425 97h1v1h-1zM433 79h1v1h-1zM433 81h1v1h-1zM433 83h1v1h-1zM433 85h1v1h-1zM433 87h1v1h-1zM433 89h1v1h-1zM433 91h1v1h-1zM433 93h1v1h-1zM433 95h1v1h-1zM433 97h1v1h-1zM441 79h1v1h-1zM441 81h1v1h-1zM441 83h1v1h-1zM441 85h1v1h-1zM441 87h1v1h-1zM441 89h1v1h-1zM441 91h1v1h-1zM441 93h1v1h-1zM441 95h1v1h-1zM441 97h1v1h-1zM417 79h1v1h-1zM419 79h1v1h-1zM421 79h1v1h-1zM423 79h1v1h-1zM425 79h1v1h-1zM427 79h1v1h-1zM429 79h1v1h-1zM431 79h1v1h-1zM433 79h1v1h-1zM435 79h1v1h-1zM437 79h1v1h-1zM439 79h1v1h-1zM441 79h1v1h-1zM417 85h1v1h-1zM419 85h1v1h-1zM421 85h1v1h-1zM423 85h1v1h-1zM425 85h1v1h-1zM427 85h1v1h-1zM429 85h1v1h-1zM431 85h1v1h-1zM433 85h1v1h-1zM435 85h1v1h-1zM437 85h1v1h-1zM439 85h1v1h-1zM441 85h1v1h-1zM417 91h1v1h-1zM419 91h1v1h-1zM421 91h1v1h-1zM423 91h1v1h-1zM425 91h1v1h-1zM427 91h1v1h-1zM429 91h1v1h-1zM431 91h1v1h-1zM433 91h1v1h-1zM435 91h1v1h-1zM437 91h1v1h-1zM439 91h1v1h-1zM441 91h1v1h-1zM417 97h1v1h-1zM419 97h1v1h-1zM421 97h1v1h-1zM423 97h1v1h-1zM425 97h1v1h-1zM427 97h1v1h-1zM429 97h1v1h-1zM431 97h1v1h-1zM433 97h1v1h-1zM435 97h1v1h-1zM437 97h1v1h-1zM439 97h1v1h-1zM441 97h1v1h-1z" fill="#555"/><path d="M460.5 77.5L478 80V99.8L460.5 97.5Z" fill="#fff5a8" stroke="#a8a070" stroke-width="0.8"/><path d="M456 77Q456 75.5 458 76L481 79.5Q482.5 80.5 481 82L458 79Q456 78.5 456 77Z" fill="#e0e0e0" stroke="#888" stroke-width="0.8"/><text x="451.5" y="95.2" font-family="Liberation Sans" font-size="13.5" fill="#2266bb" text-anchor="start" font-weight="normal" textLength="23.5" lengthAdjust="spacingAndGlyphs" >DXF</text><path d="M499 79.6H511.3V92" fill="none" stroke="#448844" stroke-width="1.1"/><path d="M493.3 79.6L500 76.8V82.4Z" fill="#88dd55" stroke="#2f6f2f" stroke-width="0.7"/><path d="M511.3 98.3L508.5 91.2H514.1Z" fill="#88dd55" stroke="#2f6f2f" stroke-width="0.7"/><circle cx="511.3" cy="79.6" r="2.1" fill="#66cc44" stroke="#2f6f2f" stroke-width="0.7"/><path d="M525.5 95.5Q524 83 533.5 82.5Q541.5 82.5 543.5 93" fill="none" stroke="#5aaadd" stroke-width="4.2"/><path d="M537.5 92.5H549L543.5 101Z" fill="#5aaadd"/><text x="521.5" y="91" font-family="Liberation Sans" font-size="12.5" fill="#333" textLength="5" lengthAdjust="spacingAndGlyphs">1</text><text x="532.5" y="83.8" font-family="Liberation Sans" font-size="12.5" fill="#333" textLength="6" lengthAdjust="spacingAndGlyphs">2</text><text x="542.8" y="89.6" font-family="Liberation Sans" font-size="12.5" fill="#333" textLength="6.5" lengthAdjust="spacingAndGlyphs">3</text><path d="M560.5 77.5Q570 72 580 75.8Q587 79 590.8 86.5Q584 80 576 78.6Q568 77.6 560.5 77.5Z" fill="#8b4a2a"/><path d="M558.5 92Q558.5 84 567.5 82.3Q574 81.5 577.5 84Q570 83.8 566 85.5Q561.5 88 561 92Z" fill="#9cbccc"/><clipPath id="eyec"><path d="M562 90.5Q570 85.5 578 87.8Q584 90.5 587.5 102Q576 100.5 562 90.5Z"/></clipPath><path d="M562 90.5Q570 85.5 578 87.8Q584 90.5 587.5 102Q576 100.5 562 90.5Z" fill="#fff"/><circle cx="573.5" cy="94.3" r="4.3" fill="#5a9080" clip-path="url(#eyec)"/><circle cx="571.3" cy="94.6" r="1" fill="#fff"/><path d="M562 90.5Q570 85.5 578 87.8Q584 90.5 587.5 102Q576 100.5 562 90.5Z" fill="none" stroke="#111" stroke-width="1.3"/><path d="M563 89Q570 85.5 577 86.5Q583 88 586 92" fill="none" stroke="#2a3a40" stroke-width="0.9"/></svg>
</body></html>
